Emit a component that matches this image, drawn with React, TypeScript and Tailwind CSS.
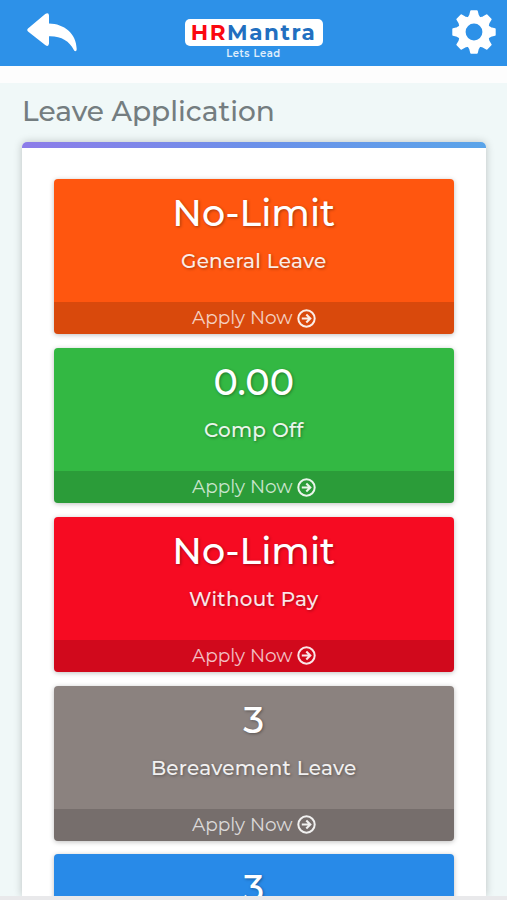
import React from "react";

type Leave = {
  balance: string;
  name?: string;
  color: string;
};

const leaves: Leave[] = [
  { balance: "No-Limit", name: "General Leave", color: "bg-[#ff560f]" },
  { balance: "0.00", name: "Comp Off", color: "bg-[#33b843]" },
  { balance: "No-Limit", name: "Without Pay", color: "bg-[#f60b22]" },
  { balance: "3", name: "Bereavement Leave", color: "bg-[#8b827f]" },
  { balance: "3", color: "bg-[#288ae8]" },
];

function BackArrow() {
  return (
    <svg className="ml-[27px] mt-[12.5px] h-[39px] w-[50px]" viewBox="0 0 50 39" fill="white">
      <path d="M1 15.6 L18.2 1 Q21.8 -1.2 22 2.6 V10.4 C37 10.6 49.5 20.5 49.7 36 C49.7 38.8 47.6 38.9 46.7 36.8 C42.5 28 34 22.8 22 23.2 V30.6 Q21.6 34.4 18.2 32 L1 18.5 Q-0.5 17 1 15.6 Z" />
    </svg>
  );
}

const toothAngles = [0, 45, 90, 135, 180, 225, 270, 315];

function Gear() {
  return (
    <svg className="mr-[10px] mt-[8.5px] h-[46px] w-[46px] justify-self-end" viewBox="-23 -23 46 46" fill="white">
      <circle r="12.2" fill="none" stroke="white" strokeWidth="7.6" />
      {toothAngles.map((angle) => (
        <path
          key={angle}
          d="M-2.9 -20.8H2.9L3.9 -16.8L5.4 -14.2H-5.4L-3.9 -16.8Z"
          transform={`rotate(${angle})`}
          stroke="white"
          strokeWidth="1.8"
          strokeLinejoin="round"
        />
      ))}
    </svg>
  );
}

function CircleArrow() {
  return (
    <svg className="h-[19px] w-[19px]" viewBox="0 0 19 19" fill="none" stroke="currentColor" strokeWidth="2">
      <circle cx="9.5" cy="9.5" r="8.2" />
      <path d="M4.8 9.5H13M9.3 5.5L13.3 9.5L9.3 13.5" strokeWidth="2.1" />
    </svg>
  );
}

function LeaveCard({ leave }: { leave: Leave }) {
  return (
    <section className={`flex h-[155px] shrink-0 flex-col overflow-hidden rounded-[4px] text-center text-white shadow-[0_1px_5px_rgba(0,0,0,0.25)] ${leave.color}`}>
      <div className="h-[123px] [text-shadow:1px_1px_3px_rgba(0,0,0,0.35)]">
        <div className="mt-[13px] text-[36.5px] font-medium leading-[42px]">{leave.balance}</div>
        {leave.name && (
          <div className="mt-[14px] text-[20px] font-medium leading-[26px] tracking-[0.25px] text-white/90">{leave.name}</div>
        )}
      </div>
      {leave.name && (
        <div className="flex h-8 items-center justify-center gap-1 bg-black/15 text-[18.5px] text-white/75">
          <span>Apply Now</span>
          <span className="text-white/90"><CircleArrow /></span>
        </div>
      )}
    </section>
  );
}

export default function App() {
  return (
    <div className="flex h-[900px] w-[507px] flex-col overflow-hidden bg-[#f0f8f8] font-[Montserrat,Inter,sans-serif]">
      <header className="grid h-[66px] shrink-0 grid-cols-[1fr_138px_1fr] items-start bg-[#2d91e8]">
        <BackArrow />
        <div className="mt-[19px] flex flex-col items-center">
          <div className="flex h-[27px] w-[138px] items-center justify-center rounded-[5px] bg-white text-[21.5px] font-bold tracking-[1.6px] text-[#226fc0]">
            <span className="text-[#fb0710]">HR</span>
            <span>Mantra</span>
          </div>
          <div className="pt-px text-[10px] font-semibold leading-[14px] tracking-[0.6px] text-white/85">Lets Lead</div>
        </div>
        <Gear />
      </header>
      <div className="h-[17px] shrink-0 bg-[#fdfdfd]" />
      <h1 className="ml-[22px] h-[58.5px] shrink-0 pt-[9px] text-[28px] font-medium leading-[38px] text-[#747d80]">Leave Application</h1>
      <main className="ml-[22px] mr-[21px] flex h-[754.5px] shrink-0 flex-col overflow-hidden rounded-t-[5px] bg-white shadow-[0_0_8px_rgba(0,0,0,0.22)]">
        <div className="h-[6px] shrink-0 bg-linear-to-r from-[#8c7ce9] via-[#6b90e9] to-[#5aa4e9]" />
        <div className="flex flex-col gap-[13.75px] pl-8 pr-[32.5px] pt-[31.8px]">
          {leaves.map((leave, index) => <LeaveCard key={index} leave={leave} />)}
        </div>
      </main>
      <div className="relative h-1 shrink-0 bg-[#e9e9eb]" />
    </div>
  );
}
